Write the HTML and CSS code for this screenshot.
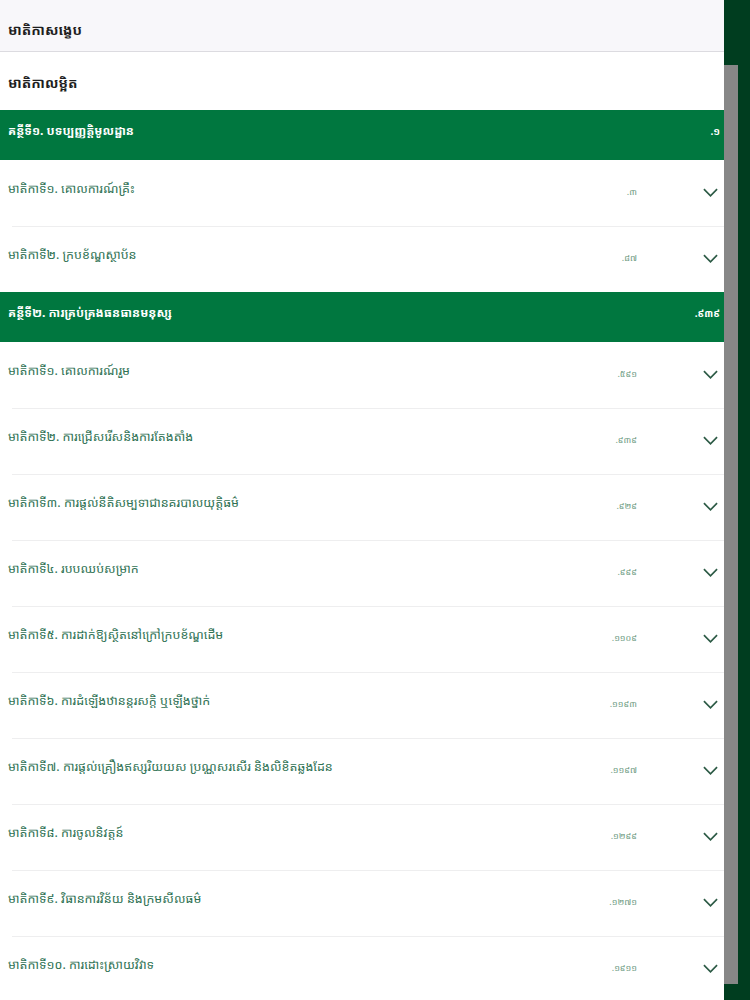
FILE: index.html
```html
<!DOCTYPE html>
<html lang="km">
<head>
<meta charset="utf-8">
<link rel="stylesheet" href="styles.css">
</head>
<body>
<div class="frame">
  <main class="content">
    <div class="top-row summary">មាតិកាសង្ខេប</div>
    <div class="top-row detail">មាតិកាលម្អិត</div>

    <div class="chapter"><span>គន្ថីទី១. បទប្បញ្ញត្តិមូលដ្ឋាន</span><span class="cpage">.១</span></div>
    <div class="article"><span class="atitle">មាតិកាទី១. គោលការណ៍គ្រឹះ</span><span class="apage">.៣</span><svg class="chev" viewBox="0 0 16 9"><path d="M1 1 L8 8 L15 1"/></svg></div>
    <div class="article"><span class="atitle">មាតិកាទី២. ក្របខ័ណ្ឌស្ថាប័ន</span><span class="apage">.៨៧</span><svg class="chev" viewBox="0 0 16 9"><path d="M1 1 L8 8 L15 1"/></svg></div>

    <div class="chapter"><span>គន្ថីទី២. ការគ្រប់គ្រងធនធានមនុស្ស</span><span class="cpage">.៩៣៩</span></div>
    <div class="article"><span class="atitle">មាតិកាទី១. គោលការណ៍រួម</span><span class="apage">.៥៩១</span><svg class="chev" viewBox="0 0 16 9"><path d="M1 1 L8 8 L15 1"/></svg></div>
    <div class="article"><span class="atitle">មាតិកាទី២. ការជ្រើសរើសនិងការតែងតាំង</span><span class="apage">.៩៣៩</span><svg class="chev" viewBox="0 0 16 9"><path d="M1 1 L8 8 L15 1"/></svg></div>
    <div class="article"><span class="atitle">មាតិកាទី៣. ការផ្តល់នីតិសម្បទាជានគរបាលយុត្តិធម៌</span><span class="apage">.៩២៩</span><svg class="chev" viewBox="0 0 16 9"><path d="M1 1 L8 8 L15 1"/></svg></div>
    <div class="article"><span class="atitle">មាតិកាទី៤. របបឈប់សម្រាក</span><span class="apage">.៩៩៩</span><svg class="chev" viewBox="0 0 16 9"><path d="M1 1 L8 8 L15 1"/></svg></div>
    <div class="article"><span class="atitle">មាតិកាទី៥. ការដាក់ឱ្យស្ថិតនៅក្រៅក្របខ័ណ្ឌដើម</span><span class="apage">.១១០៩</span><svg class="chev" viewBox="0 0 16 9"><path d="M1 1 L8 8 L15 1"/></svg></div>
    <div class="article"><span class="atitle">មាតិកាទី៦. ការដំឡើងឋានន្តរសក្តិ ឬឡើងថ្នាក់</span><span class="apage">.១១៩៣</span><svg class="chev" viewBox="0 0 16 9"><path d="M1 1 L8 8 L15 1"/></svg></div>
    <div class="article"><span class="atitle">មាតិកាទី៧. ការផ្តល់គ្រឿងឥស្សរិយយស ប្រណ្ណសរសើរ និងលិខិតឆ្លងដែន</span><span class="apage">.១១៩៧</span><svg class="chev" viewBox="0 0 16 9"><path d="M1 1 L8 8 L15 1"/></svg></div>
    <div class="article"><span class="atitle">មាតិកាទី៨. ការចូលនិវត្តន៍</span><span class="apage">.១២៩៩</span><svg class="chev" viewBox="0 0 16 9"><path d="M1 1 L8 8 L15 1"/></svg></div>
    <div class="article"><span class="atitle">មាតិកាទី៩. វិធានការវិន័យ និងក្រមសីលធម៌</span><span class="apage">.១២៧១</span><svg class="chev" viewBox="0 0 16 9"><path d="M1 1 L8 8 L15 1"/></svg></div>
    <div class="article"><span class="atitle">មាតិកាទី១០. ការដោះស្រាយវិវាទ</span><span class="apage">.១៩១១</span><svg class="chev" viewBox="0 0 16 9"><path d="M1 1 L8 8 L15 1"/></svg></div>
  </main>
  <aside class="side">
    <div class="thumb"></div>
  </aside>
</div>
</body>
</html>
```

FILE: styles.css
```css
html, body {
  margin: 0;
  padding: 0;
  height: 1000px;
  overflow: hidden;
  background: #ffffff;
  font-family: "Noto Sans Khmer", "Khmer OS", "Noto Sans", "DejaVu Sans", sans-serif;
}

.frame {
  display: flex;
  width: 750px;
  height: 1000px;
}

.content {
  width: 724px;
  flex: none;
  display: flex;
  flex-direction: column;
  background: #ffffff;
}

.top-row {
  flex: none;
  display: flex;
  align-items: center;
  padding-left: 8px;
  font-size: 14px;
  font-weight: 700;
  color: #1e1e1e;
  box-sizing: border-box;
}

.summary {
  height: 52px;
  padding-top: 8px;
  background: #f8f7fa;
  border-bottom: 1px solid #dcdbe0;
}

.detail {
  height: 58px;
  padding-top: 2px;
}

.chapter {
  height: 50px;
  flex: none;
  display: flex;
  align-items: flex-start;
  justify-content: space-between;
  padding: 12px 4px 0 8px;
  box-sizing: border-box;
  background: #00773f;
  color: #ffffff;
  font-size: 12px;
  font-weight: 700;
}

.cpage {
  font-size: 10px;
  padding-top: 2px;
}

.article {
  height: 66px;
  flex: none;
  display: flex;
  align-items: flex-start;
  padding: 20px 0 0 8px;
  box-sizing: border-box;
  position: relative;
  color: #2f7254;
  font-size: 12.5px;
}

.article + .article::before {
  content: "";
  position: absolute;
  left: 12px;
  right: 0;
  top: 0;
  height: 1px;
  background: #eeeeef;
}

.atitle {
  flex: 1;
}

.apage {
  width: 60px;
  text-align: right;
  font-size: 9px;
  color: #6f9c84;
  padding-top: 5px;
  margin-right: 66px;
}

.chev {
  width: 15px;
  height: 9px;
  margin-top: 8px;
  margin-right: 6px;
  fill: none;
  stroke: #2c5a45;
  stroke-width: 1.8;
}

.side {
  flex: none;
  width: 26px;
  height: 1000px;
  background: #003d1f;
}

.thumb {
  margin-top: 65px;
  width: 14px;
  height: 919px;
  background: #878787;
}
```
